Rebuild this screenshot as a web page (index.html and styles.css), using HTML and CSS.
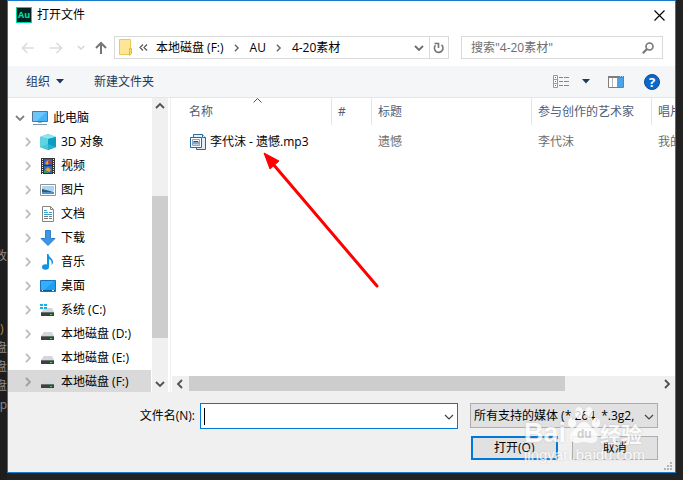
FILE: index.html
```html
<!DOCTYPE html>
<html lang="zh-CN">
<head>
    <meta charset="UTF-8">
    <meta name="viewport" content="width=device-width, initial-scale=1.0">
    <title>打开文件</title>
    <link rel="stylesheet" href="styles.css">
</head>
<body>
    <svg class="defs" aria-hidden="true">
        <symbol id="chev-right" viewBox="0 0 8 10"><path d="M2 1l4 4-4 4" fill="none" stroke="currentColor" stroke-width="1.8"/></symbol>
        <symbol id="chev-down" viewBox="0 0 10 8"><path d="M1 2l4 4 4-4" fill="none" stroke="currentColor" stroke-width="1.8"/></symbol>
        <symbol id="thin-down" viewBox="0 0 10 8"><path d="M1 2l4 4 4-4" fill="none" stroke="currentColor" stroke-width="1.2"/></symbol>
        <symbol id="drive" viewBox="0 0 16 16">
            <path d="M4 6h8l2 4H1z" fill="#d3d6da"/>
            <path d="M1 10h13v4H1z" fill="#3c4043"/>
            <path d="M1 10h13v1H1z" fill="#6b6f73"/>
            <path d="M10 12h2v1h-2z" fill="#3fe04a"/>
        </symbol>
    </svg>

    <div class="backdrop">
        <span class="back-text">改</span>
        <span class="back-text orange">)</span>
        <span class="back-text">盘</span>
        <span class="back-text">盘</span>
        <span class="back-text">盘</span>
        <span class="back-text">op</span>
    </div>

    <main class="dialog">
        <header class="titlebar">
            <svg class="app-icon" width="16" height="16" viewBox="0 0 16 16" aria-hidden="true">
                <rect x="0.5" y="0.5" width="15" height="15" fill="#00231f" stroke="#00d8a4"/>
                <text class="app-letters" x="8" y="11" text-anchor="middle">Au</text>
            </svg>
            <h1 class="title">打开文件</h1>
            <button class="close" aria-label="关闭">
                <svg width="11" height="11" viewBox="0 0 11 11"><path d="M.5.5l10 10M10.5.5l-10 10" stroke="#000" stroke-width="1.1"/></svg>
            </button>
        </header>

        <nav class="navbar">
            <button class="nav-btn" aria-label="返回"><svg width="13" height="12" viewBox="0 0 13 12"><path d="M13 6H1.5M6.500 1l-5 5 5 5" fill="none" stroke="#dcdcdc" stroke-width="1.6"/></svg></button>
            <button class="nav-btn forward" aria-label="前进"><svg width="13" height="12" viewBox="0 0 13 12"><path d="M0 6h11.500M6.500 1l5 5-5 5" fill="none" stroke="#dcdcdc" stroke-width="1.6"/></svg></button>
            <button class="nav-btn recent" aria-label="最近"><svg width="8" height="7" viewBox="0 0 10 8" color="#d4d4d4"><use href="#chev-down"/></svg></button>
            <button class="nav-btn up" aria-label="上移"><svg width="12" height="13" viewBox="0 0 12 13"><path d="M6 13V2M1 7l5-5 5 5" fill="none" stroke="#757575" stroke-width="2"/></svg></button>
            <div class="address">
                <svg width="13" height="17" viewBox="0 0 13 17" aria-hidden="true">
                    <path d="M.5.5h11v15H.5z" fill="#ffe596" stroke="#ecc95a"/>
                    <path d="M10.500 9.500h2v5l-2 2z" fill="#f8d775" stroke="#e2b93c"/>
                </svg>
                <svg class="more" width="9" height="7" viewBox="0 0 9 7" aria-hidden="true"><path d="M4 .5l-3 3 3 3M8 .5l-3 3 3 3" fill="none" stroke="#555" stroke-width="1.2"/></svg>
                <button class="crumb">本地磁盘 (F:)</button>
                <svg class="crumb-sep" width="7" height="8"><use href="#chev-right"/></svg>
                <button class="crumb">AU</button>
                <svg class="crumb-sep" width="7" height="8"><use href="#chev-right"/></svg>
                <button class="crumb">4-20素材</button>
                <button class="address-drop" aria-label="以前的位置"><svg width="10" height="8"><use href="#chev-down"/></svg></button>
                <button class="refresh" aria-label="刷新">
                    <svg width="12" height="12" viewBox="0 0 12 12"><path d="M2.500 3.200A4.300 4.300 0 1 0 8.500 2.800" fill="none" stroke="#757575" stroke-width="1.6"/><path d="M1.500 1.500h4V6" fill="none" stroke="#757575" stroke-width="1.6"/></svg>
                </button>
            </div>
            <label class="search">
                <input class="search-input" type="text" placeholder='搜索"4-20素材"' aria-label="搜索">
                <svg width="12" height="12" viewBox="0 0 12 12" aria-hidden="true"><circle cx="7.5" cy="4.5" r="3.5" fill="none" stroke="#757575" stroke-width="1.6"/><path d="M5 7L.8 11.200" stroke="#757575" stroke-width="2"/></svg>
            </label>
        </nav>

        <div class="toolbar">
            <button class="tool">组织 <svg width="8" height="5" viewBox="0 0 8 5"><path d="M0 0h8L4 4.500z" fill="#1e395b"/></svg></button>
            <button class="tool new-folder">新建文件夹</button>
            <button class="tool view" aria-label="更改视图">
                <svg width="16" height="13" viewBox="0 0 16 13">
                    <path d="M.5.5h4v12h-4zM.5 4.500h4M.5 8.500h4" fill="#fff" stroke="#999"/>
                    <path d="M2 2h1v1H2z" fill="#c33"/><path d="M2 6h1v1H2z" fill="#28c"/><path d="M2 10h1v1H2z" fill="#c33"/>
                    <path d="M6 2.500h4M11 2.500h5M6 6.500h4M11 6.500h5M6 10.500h4M11 10.500h5" stroke="#888"/>
                </svg>
                <svg width="8" height="5" viewBox="0 0 8 5"><path d="M0 0h8L4 4.500z" fill="#1e395b"/></svg>
            </button>
            <button class="tool" aria-label="预览窗格">
                <svg width="16" height="12" viewBox="0 0 16 12">
                    <path d="M.5.5h15v11H.5z" fill="#fff" stroke="#7d7d7d"/><path d="M0 0h16v2H0z" fill="#7d7d7d"/>
                    <path d="M4.500 2v9" stroke="#b5b5b5"/><path d="M9 2h6v9H9z" fill="#4da3e8"/>
                    <path d="M12 0h1v1h-1zM14 0h1v1h-1z" fill="#9fd4ff"/>
                </svg>
            </button>
            <button class="tool help" aria-label="帮助">
                <svg width="16" height="16" viewBox="0 0 16 16"><circle cx="8" cy="8" r="7.5" fill="#0a69c8" stroke="#14479a"/><text class="help-mark" x="8" y="13" text-anchor="middle">?</text></svg>
            </button>
        </div>

        <div class="content">
            <aside class="sidebar">
                <ul class="tree">
                    <li class="node root">
                        <svg class="arrow open" width="10" height="8"><use href="#chev-down"/></svg>
                        <svg width="16" height="16" viewBox="0 0 16 16"><path d="M.5 1.500h15v10H.5z" fill="#47b4f7" stroke="#57758c"/><path d="M1 2h13L5 11H1z" fill="#6bc6fb"/><path d="M6 12h4v1H6z" fill="#9fb4c4"/><path d="M1 14.500h14" stroke="#7b95a8"/></svg>
                        <a class="label" href="#">此电脑</a>
                    </li>
                    <li class="node">
                        <svg class="arrow" width="8" height="10"><use href="#chev-right"/></svg>
                        <svg width="16" height="16" viewBox="0 0 16 16"><path d="M8 0l8 3v10l-8 3-8-3V3z" fill="#27b5d3"/><path d="M8 0l8 3-8 2-8-2z" fill="#8ce5ef"/><path d="M0 3l8 2v11l-8-3z" fill="#5fd3e2"/><path d="M8 5l8-2v10l-8 3z" fill="#0c9dc2"/><path d="M0 13l8-3 8 3-8 3z" fill="#35bed5" opacity=".6"/></svg>
                        <a class="label" href="#">3D 对象</a>
                    </li>
                    <li class="node">
                        <svg class="arrow" width="8" height="10"><use href="#chev-right"/></svg>
                        <svg width="16" height="16" viewBox="0 0 16 16"><path d="M1 0h14v16H1z" fill="#333"/><path d="M2.500 1v15M13.500 1v15" stroke="#eee" stroke-dasharray="1 1"/><path d="M4 1h8v6H4z" fill="#3d5bb5"/><path d="M4 8h8v7H4z" fill="#2d6db8"/><path d="M5 5l3-3 2 2-3 3z" fill="#e6a429"/><path d="M8 3h3v2H8z" fill="#c8392d"/><path d="M5 12l3-3 3 3-2 2z" fill="#e6a429"/><path d="M4 13h4v2H4z" fill="#3a9b54"/></svg>
                        <a class="label" href="#">视频</a>
                    </li>
                    <li class="node">
                        <svg class="arrow" width="8" height="10"><use href="#chev-right"/></svg>
                        <svg width="16" height="16" viewBox="0 0 16 16"><path d="M.5 2.500h15v11H.5z" fill="#fff" stroke="#929292"/><path d="M2 4h12v5H2z" fill="#a9d6f6"/><path d="M2 7l4 1 8 2v2H2z" fill="#315f69"/><path d="M2 10h12v2H2z" fill="#4f8fc6"/></svg>
                        <a class="label" href="#">图片</a>
                    </li>
                    <li class="node">
                        <svg class="arrow" width="8" height="10"><use href="#chev-right"/></svg>
                        <svg width="16" height="16" viewBox="0 0 16 16"><path d="M2.500.5h8l3 3v12h-11z" fill="#fff" stroke="#858585"/><path d="M10.500.5v3h3" fill="none" stroke="#858585"/><path d="M4 6.500h4M4 4.500h3M4 8.500h8M9 6.500h3" stroke="#3c9dcb"/><path d="M4 10.500h4M9 10.500h3M4 12.500h4M9 12.500h3" stroke="#777"/></svg>
                        <a class="label" href="#">文档</a>
                    </li>
                    <li class="node">
                        <svg class="arrow" width="8" height="10"><use href="#chev-right"/></svg>
                        <svg width="16" height="16" viewBox="0 0 16 16"><path d="M5.500.5h5v8h4.500L8 15.500 1 8.500h4.500z" fill="#3d96e5" stroke="#2f7fca"/></svg>
                        <a class="label" href="#">下载</a>
                    </li>
                    <li class="node">
                        <svg class="arrow" width="8" height="10"><use href="#chev-right"/></svg>
                        <svg width="16" height="16" viewBox="0 0 16 16"><ellipse cx="5.5" cy="13" rx="3.5" ry="2.7" fill="#0f93e6"/><path d="M7 0h1.500c.5 4 5 4 4.500 9l-1.500 2c.5-4-.5-5-2.500-6v8H7z" fill="#0f93e6"/></svg>
                        <a class="label" href="#">音乐</a>
                    </li>
                    <li class="node">
                        <svg class="arrow" width="8" height="10"><use href="#chev-right"/></svg>
                        <svg width="16" height="16" viewBox="0 0 16 16"><path d="M.5 2.500h15v11H.5z" fill="#1ba0f5" stroke="#1673bb"/><path d="M1 3h13L4 12H1z" fill="#35affb"/><path d="M1 12.500h14" stroke="#0b5b99"/><path d="M2 12.500h1M12 12.500h2" stroke="#fff"/></svg>
                        <a class="label" href="#">桌面</a>
                    </li>
                    <li class="node">
                        <svg class="arrow" width="8" height="10"><use href="#chev-right"/></svg>
                        <svg width="16" height="16" viewBox="0 0 16 16"><path d="M6 6h6l2 4H1z" fill="#d3d6da"/><path d="M1 10h13v4H1z" fill="#3c4043"/><path d="M1 10h13v1H1z" fill="#6b6f73"/><path d="M10 12h2v1h-2z" fill="#3fe04a"/><path d="M0 2h3v2H0zM4 2h3v2H4zM0 5h3v2H0zM4 5h3v2H4z" fill="#12b5ea"/></svg>
                        <a class="label" href="#">系统 (C:)</a>
                    </li>
                    <li class="node">
                        <svg class="arrow" width="8" height="10"><use href="#chev-right"/></svg>
                        <svg width="16" height="16"><use href="#drive"/></svg>
                        <a class="label" href="#">本地磁盘 (D:)</a>
                    </li>
                    <li class="node">
                        <svg class="arrow" width="8" height="10"><use href="#chev-right"/></svg>
                        <svg width="16" height="16"><use href="#drive"/></svg>
                        <a class="label" href="#">本地磁盘 (E:)</a>
                    </li>
                    <li class="node selected">
                        <svg class="arrow" width="8" height="10"><use href="#chev-right"/></svg>
                        <svg width="16" height="16"><use href="#drive"/></svg>
                        <a class="label" href="#">本地磁盘 (F:)</a>
                    </li>
                </ul>
                <div class="vscroll">
                    <svg class="flip" width="10" height="8"><use href="#chev-down"/></svg>
                    <div class="vtrack"><div class="vthumb"></div></div>
                    <svg width="10" height="8"><use href="#chev-down"/></svg>
                </div>
            </aside>

            <section class="files">
                <div class="table-wrap">
                    <table class="file-table">
                        <colgroup>
                            <col class="col-name"><col class="col-num"><col class="col-wide"><col class="col-artist"><col class="col-wide">
                        </colgroup>
                        <thead>
                            <tr>
                                <th>名称<svg class="sort" width="9" height="5" viewBox="0 0 9 5"><path d="M.5 4.500l4-4 4 4" fill="none" stroke="#555"/></svg></th>
                                <th>#</th><th>标题</th><th>参与创作的艺术家</th><th>唱片集</th>
                            </tr>
                        </thead>
                        <tbody>
                            <tr>
                                <td>
                                    <div class="file">
                                        <svg width="16" height="16" viewBox="0 0 16 16" aria-hidden="true">
                                            <path d="M3.500.5h9l3 3v12h-9v-2h-3z" fill="#e3eff8" stroke="#29699c"/><path d="M12.500.5v3h3" fill="#fff" stroke="#29699c"/>
                                            <path d="M.5 3.500h11v10H.5z" fill="#fff" stroke="#29699c"/><path d="M2.500 5.500h7v6h-7z" fill="#fff" stroke="#7fa9c9"/>
                                            <path d="M4 10.500V7M4 7.500h4V10.500M6 7.500v3" fill="none" stroke="#1d4f7c"/>
                                        </svg>
                                        李代沫 - 遗憾.mp3
                                    </div>
                                </td>
                                <td></td><td>遗憾</td><td>李代沫</td><td>我的</td>
                            </tr>
                        </tbody>
                    </table>
                </div>
                <div class="hscroll">
                    <svg class="flip" width="8" height="10"><use href="#chev-right"/></svg>
                    <div class="htrack"><div class="hthumb"></div></div>
                    <svg width="8" height="10"><use href="#chev-right"/></svg>
                </div>
                <svg class="pointer" width="118" height="140" viewBox="0 0 118 140" aria-hidden="true">
                    <path d="M10 12l104 122" stroke="#f00" stroke-width="3" stroke-linecap="round"/><path d="M1 1l15 8-9 8z" fill="#f00" stroke="#f00"/>
                </svg>
            </section>
        </div>

        <form class="footer">
            <label class="name-label" for="filename">文件名(N):</label>
            <div class="field">
                <input class="name-input" id="filename" type="text">
                <span class="caret"></span>
                <svg class="field-arrow" width="10" height="8"><use href="#thin-down"/></svg>
            </div>
            <div class="field type-field">
                <select class="type-select" aria-label="文件类型"><option>所有支持的媒体 (*.264, *.3g2,</option></select>
                <svg class="field-arrow" width="10" height="8"><use href="#thin-down"/></svg>
            </div>
            <div class="actions">
                <button class="btn primary" type="button">打开(O)</button>
                <button class="btn" type="button">取消</button>
            </div>
            <svg class="grip" width="8" height="8" viewBox="0 0 8 8" aria-hidden="true"><path d="M6 0h2v2H6zM3 3h2v2H3zM6 3h2v2H6zM0 6h2v2H0zM3 6h2v2H3zM6 6h2v2H6z" fill="#b4b4b4"/></svg>
            <div class="watermark">
                <div class="brand">
                    <span class="brand-latin">Bai</span>
                    <span class="paw">
                        <svg width="32" height="40" viewBox="0 0 32 40" aria-hidden="true"><g fill="#fff"><ellipse cx="4" cy="17" rx="4" ry="5"/><ellipse cx="11" cy="7" rx="4" ry="6"/><ellipse cx="21" cy="7" rx="4" ry="6"/><ellipse cx="28" cy="17" rx="4" ry="5"/><path d="M16 16c5 0 6 5 10 8 5 4 5 13-2 13-4 0-5-1-8-1s-4 1-8 1c-7 0-7-9-2-13 4-3 5-8 10-8z"/></g></svg>
                        <span class="paw-text">du</span>
                    </span>
                    <span class="brand-cn">经验</span>
                </div>
                <div class="brand-url">jingyan.baidu.com</div>
            </div>
        </form>
    </main>
</body>
</html>
```

FILE: styles.css
```css
* { box-sizing: border-box; }
body { margin: 0; min-height: 100vh; display: grid; grid-template-columns: 7px minmax(0, 1fr) 7px; background: #222; font: 12px/16px "Open Sans", "Noto Sans CJK SC", sans-serif; color: #000; overflow: hidden; }
button, input, select { font: inherit; color: inherit; }
button { padding: 0; border: none; background: none; }
svg { flex: none; display: block; }
.defs { position: absolute; width: 0; height: 0; }

/* window behind the dialog */
.backdrop { display: flex; flex-direction: column; align-items: flex-end; gap: 3px; padding-top: 248px; overflow: hidden; background: #1d1d1d; color: #8a8a8a; }
.back-text.orange { align-self: flex-start; margin-top: 54px; color: #b08a4a; }

.dialog { display: flex; flex-direction: column; margin-bottom: 7px; border: 1px solid #1979ca; background: #fff; min-width: 0; }

.titlebar { display: flex; align-items: center; gap: 5px; height: 28px; padding: 0 10px 0 8px; }
.title { margin: 0; font-size: 12px; font-weight: normal; }
.app-letters { font: bold 9px "Open Sans", sans-serif; fill: #00e0ae; }
.close { margin-left: auto; }

.navbar { display: flex; align-items: center; height: 37px; padding: 0 12px 0 13px; }
.nav-btn { margin-right: 16px; }
.nav-btn.forward { margin-right: 14px; }
.nav-btn.recent { margin-right: 10px; }
.nav-btn.up { margin-right: 7px; }
.address { flex: 1; display: flex; align-items: center; height: 23px; padding-left: 4px; border: 1px solid #d9d9d9; }
.crumb { white-space: nowrap; }
.more { margin: 0 8px 0 7px; }
.crumb-sep { margin: 0 10px 0 9px; color: #666; }
.address-drop { margin-left: auto; padding: 0 5px; color: #6e6e6e; }
.refresh { align-self: stretch; display: flex; align-items: center; padding: 0 3px; border-left: 1px solid #d9d9d9; }
.search { flex: none; display: flex; align-items: center; width: 202px; height: 23px; margin-left: 12px; padding: 0 8px 0 9px; border: 1px solid #d9d9d9; }
.search-input { flex: 1; min-width: 0; padding: 0; border: none; outline: none; background: none; }
.search-input::placeholder { color: #6d6d6d; opacity: 1; }

.toolbar { display: flex; align-items: center; gap: 18px; height: 32px; padding: 0 15px 0 18px; background: #f5f6f7; border-bottom: 1px solid #e5e5e5; color: #1e395b; }
.tool { display: flex; align-items: center; gap: 6px; }
.tool.new-folder { margin-left: 12px; }
.tool.view { margin-left: auto; gap: 13px; }
.tool.help { margin-left: 2px; }
.help-mark { font: bold 13px "Open Sans", sans-serif; fill: #fff; }

.content { flex: 1; display: flex; min-height: 0; }
.sidebar { flex: 0 0 163px; display: flex; gap: 1px; border-right: 1px solid #f0f0f0; padding-right: 2px; }
.tree { flex: 1; margin: 0; padding: 8px 0 0; list-style: none; overflow: hidden; height: 294px; }
.node { display: flex; align-items: center; gap: 5px; height: 24px; padding-left: 16px; }
.node.root { padding-left: 7px; }
.node.selected { background: #d9d9d9; }
.arrow { margin-right: 3px; color: #c0c0c0; }
.arrow.open { margin-right: 2px; color: #808080; }
.selected .arrow { color: #a0a0a0; }
.label { color: #000; text-decoration: none; white-space: nowrap; }
.vscroll { width: 16px; display: flex; flex-direction: column; align-items: center; padding: 4px 0; background: #f0f0f0; color: #505050; }
.vtrack { flex: 1; align-self: stretch; padding-top: 86px; }
.vthumb { height: 142px; background: #cdcdcd; }
.flip { transform: rotate(180deg); }

.files { position: relative; flex: 1; min-width: 0; display: flex; flex-direction: column; padding-left: 1px; }
.table-wrap { flex: 1; overflow: hidden; }
.file-table { width: 640px; table-layout: fixed; border-collapse: separate; border-spacing: 0; color: #6d6d6d; }
.col-name { width: 160px; }
.col-num { width: 40px; }
.col-wide { width: 160px; }
.col-artist { width: 120px; }
th { position: relative; height: 27px; padding: 0 6px; border-right: 1px solid #e5e5e5; text-align: left; font-weight: normal; color: #4c607a; white-space: nowrap; }
td { height: 34px; padding: 0 6px; white-space: nowrap; }
th:first-child, td:first-child { padding-left: 17px; }
.sort { position: absolute; left: 81px; top: 0; }
.file { display: flex; align-items: center; gap: 4px; margin-left: 1px; color: #000; }
.hscroll { display: flex; align-items: center; height: 16px; padding: 0 4px; background: #f0f0f0; color: #505050; }
.htrack { flex: 1; align-self: stretch; padding-left: 5px; margin-right: 4px; }
.hthumb { width: 80%; height: 15px; background: #cdcdcd; }
.pointer { position: absolute; left: 92px; top: 54px; }

.footer { position: relative; display: grid; grid-template-columns: 192px minmax(0, 1fr) 200px; row-gap: 6px; height: 80px; padding: 11px 17px 12px 0; background: #f0f0f0; }
.name-label { padding-right: 5px; text-align: right; line-height: 26px; }
.field { position: relative; height: 26px; }
.type-field { margin-left: 12px; }
.name-input { width: 100%; height: 26px; padding: 0 22px 0 4px; border: 1px solid #0078d7; background: #fff; outline: none; }
.type-select { width: 100%; height: 25px; padding: 0 18px 0 3px; border: 1px solid #adadad; border-radius: 0; background: #e1e1e1; appearance: none; }
.field-arrow { position: absolute; right: 4px; top: 10px; color: #444; pointer-events: none; }
.caret { position: absolute; left: 4px; top: 5px; width: 1px; height: 17px; background: #000; }
.actions { grid-column: 3; display: grid; grid-template-columns: 1fr 1fr; gap: 14px; margin-left: 13px; }
.btn { height: 24px; border: 1px solid #adadad; background: #e1e1e1; }
.btn.primary { border: 2px solid #0078d7; }
.grip { position: absolute; right: 3px; bottom: 2px; }

.watermark { position: absolute; right: 29px; top: 14px; width: 122px; color: #fff; opacity: .8; pointer-events: none; text-shadow: 0 0 2px #bbb; }
.brand { display: flex; align-items: flex-end; height: 40px; }
.brand-latin { font: bold 27px/26px "Liberation Sans", sans-serif; }
.paw { position: relative; margin-left: 2px; }
.paw-text { position: absolute; left: 9px; top: 22px; font: bold 12px/12px "Liberation Sans", sans-serif; color: #c8c8c8; text-shadow: none; }
.brand-cn { font: bold 21px/26px "Noto Sans CJK SC", sans-serif; }
.brand-url { font: 15px/18px "Liberation Sans", sans-serif; }
```
